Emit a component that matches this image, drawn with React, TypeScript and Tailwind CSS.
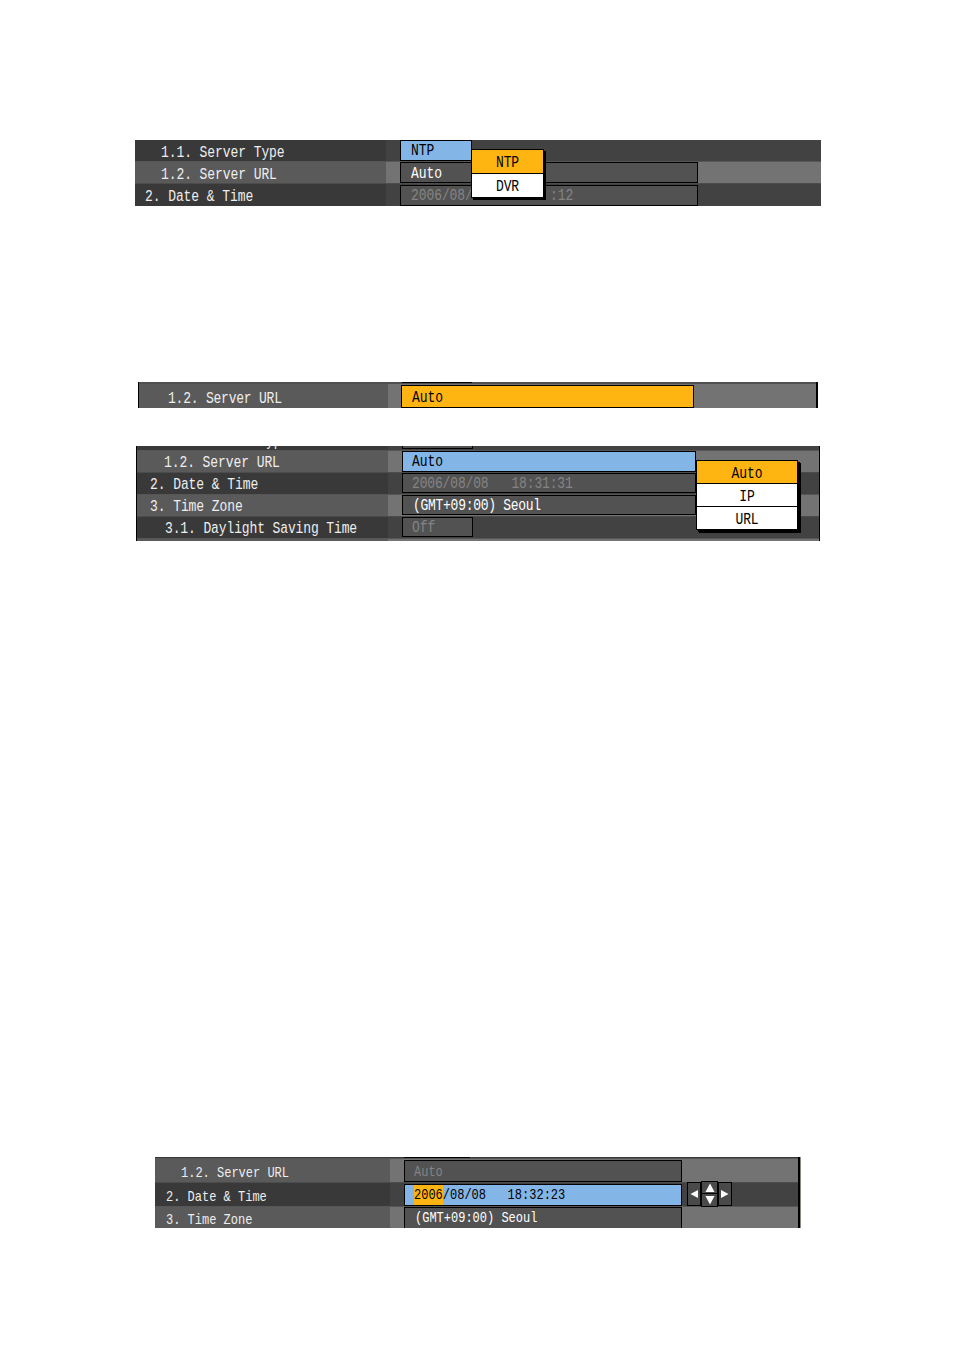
import React from 'react';
import clsx from 'clsx';

interface TextProps {
  children: React.ReactNode;
  className?: string;
}

// tall, narrow OSD lettering
const Osd: React.FC<TextProps> = ({ children, className }) => (
  <span className={clsx('inline-block whitespace-pre origin-center scale-y-[1.25]', className)}>{children}</span>
);

interface RowProps {
  label: string;
  labelClass: string;
  fieldClass: string;
  height: string;
  dark?: boolean;
  children?: React.ReactNode;
  extra?: React.ReactNode;
}

const Row: React.FC<RowProps> = ({ label, labelClass, fieldClass, height, dark = false, children, extra }) => (
  <div className={clsx('flex shrink-0 border-t', height, dark ? 'bg-[#424242] border-[#4c4c4c]' : 'bg-[#737373] border-[#565656]')}>
    <div className={clsx('flex shrink-0 items-center text-[#eeeeee]', dark ? 'bg-[#393939]' : 'bg-[#5a5a5a]', labelClass)}>
      <Osd>{label}</Osd>
    </div>
    <div className={clsx('flex shrink-0 items-center border border-black', fieldClass)}>
      <Osd>{children}</Osd>
    </div>
    {extra}
  </div>
);

interface MenuProps {
  items: string[];
  className: string;
  itemClass: string;
}

const Menu: React.FC<MenuProps> = ({ items, className, itemClass }) => (
  <div className={clsx('absolute flex flex-col border border-black bg-black gap-px', className)}>
    {items.map((item, i) => (
      <div key={item} className={clsx('flex items-center justify-center text-black', itemClass, i === 0 ? 'bg-[#ffb511]' : 'bg-white')}>
        <Osd>{item}</Osd>
      </div>
    ))}
  </div>
);

const Arrow: React.FC<{ points: string; className: string }> = ({ points, className }) => (
  <div className={clsx('flex shrink-0 items-center justify-center border border-black bg-[#4a4a4a]', className)}>
    <svg width="10" height="10" viewBox="0 0 10 10" className="shrink-0">
      <polygon points={points} fill="#fff" />
    </svg>
  </div>
);

const ArrowPad = () => (
  <div className="relative z-10 ml-[5px] -mt-[2px] flex h-[26px] items-center self-start">
    <Arrow points="9,1 9,9 1.5,5" className="h-[24px] w-[14px]" />
    <div className="flex w-[17px] flex-col">
      <Arrow points="5,0.5 9.5,9 0.5,9" className="h-[13px]" />
      <Arrow points="0.5,1 9.5,1 5,9.5" className="-mt-px h-[14px]" />
    </div>
    <Arrow points="1,1 1,9 8.5,5" className="h-[24px] w-[14px]" />
  </div>
);

export default function App() {
  return (
    <div className="flex h-[1349px] w-[954px] flex-col bg-white pt-[140px] font-['Liberation_Mono',monospace] text-[13px] leading-[16px] tracking-[-0.08px]">
      {/* server type */}
      <section className="relative ml-[135px] h-[66px] w-[686px] bg-[#424242]">
        <div className="flex h-full flex-col overflow-hidden">
          <Row label="1.1. Server Type" dark height="h-[21px] !border-t-0" labelClass="w-[251px] pl-[26px] pt-[4px]" fieldClass="ml-[14px] h-[21px] w-[72px] bg-[#84b5e7] pl-[10px] text-black">NTP</Row>
          <Row label="1.2. Server URL" height="h-[22px]" labelClass="w-[251px] pl-[26px] pt-[5px]" fieldClass="ml-[14px] h-[21px] w-[298px] bg-[#525252] pl-[10px] pt-[3px] text-white">Auto</Row>
          <Row label="2. Date & Time" dark height="h-[23px]" labelClass="w-[251px] pl-[10px] pt-[4px]" fieldClass="ml-[14px] mt-px h-[21px] w-[298px] bg-[#525252] pl-[10px] pt-px text-[#848484]">2006/08/          :12</Row>
        </div>
        <Menu items={['NTP', 'DVR']} className="left-[336px] top-[9px] w-[73px] shadow-[2px_2px_0_#000]" itemClass="h-[23px] pt-[2px]" />
      </section>

      {/* server url, focused */}
      <section className="ml-[138px] mt-[176px] flex h-[26px] w-[680px] flex-col border-l border-r-2 border-black">
        <div className="flex h-[2px] bg-[#505050]">
          <div className="ml-[263px] h-px w-[70px] bg-black" />
        </div>
        <div className="flex h-[24px] bg-[#737373]">
          <div className="flex w-[249px] items-center bg-[#5a5a5a] pl-[29px] pt-[5px] text-[#eeeeee] tracking-[-0.22px]">
            <Osd>1.2. Server URL</Osd>
          </div>
          <div className="ml-[13px] mt-px flex h-[23px] w-[293px] items-center border border-black bg-[#ffb511] pl-[10px] pt-[2px] text-black">
            <Osd>Auto</Osd>
          </div>
        </div>
      </section>

      {/* server url, menu open */}
      <section className="relative ml-[136px] mt-[38px] h-[95px] w-[684px] border-l border-r border-black bg-[#737373]">
        <div className="flex h-full flex-col overflow-hidden">
          <div className="flex h-[4px] shrink-0 bg-[#424242]">
            <div className="flex h-[4px] w-[251px] items-end overflow-hidden bg-[#393939] pl-[129px] text-[#eeeeee]">
              <Osd>yp</Osd>
            </div>
            <div className="ml-[14px] h-[3px] w-[71px] border border-t-0 border-black bg-[#525252]" />
          </div>
          <Row label="1.2. Server URL" height="h-[22px]" labelClass="w-[251px] pl-[27px] pt-[3px]" fieldClass="ml-[14px] h-[21px] w-[294px] bg-[#84b5e7] pl-[9px] pt-px text-black">Auto</Row>
          <Row label="2. Date & Time" dark height="h-[22px]" labelClass="w-[251px] pl-[13px] pt-[3px]" fieldClass="ml-[14px] h-[20px] w-[294px] bg-[#525252] pl-[9px] pt-px text-[#848484] tracking-[-0.15px]">2006/08/08   18:31:31</Row>
          <Row label="3. Time Zone" height="h-[22px]" labelClass="w-[251px] pl-[13px] pt-[3px]" fieldClass="ml-[14px] h-[20px] w-[294px] bg-[#525252] pl-[10px] pt-px text-white tracking-[-0.28px]">(GMT+09:00) Seoul</Row>
          <Row label="3.1. Daylight Saving Time" dark height="h-[22px]" labelClass="w-[251px] pl-[28px] pt-[3px] tracking-[-0.12px]" fieldClass="ml-[14px] h-[20px] w-[71px] bg-[#525252] pl-[9px] pt-[2px] text-[#848484]">Off</Row>
          <div className="flex h-[3px] shrink-0 border-t border-[#565656] bg-[#737373]">
            <div className="w-[251px] bg-[#5a5a5a]" />
          </div>
        </div>
        <Menu items={['Auto', 'IP', 'URL']} className="left-[559px] top-[14px] w-[102px] shadow-[2px_2px_0_#000,3px_3px_0_#000]" itemClass="h-[22px] pt-[3px]" />
      </section>

      {/* date editing */}
      <section className="ml-[155px] mt-[616px] flex h-[71px] w-[646px] flex-col overflow-hidden border-r border-[#8a8a82] bg-[#737373] text-[12px] tracking-normal">
        <div className="flex h-full flex-col border-r-2 border-black">
          <div className="flex h-px shrink-0 bg-[#393939]">
            <div className="ml-[249px] w-[66px] bg-black" />
          </div>
          <Row label="1.2. Server URL" height="h-[24px]" labelClass="w-[235px] pl-[26px] pt-[4px]" fieldClass="ml-[14px] mt-px h-[22px] w-[278px] bg-[#525252] pl-[9px] pt-px text-[#848484]">Auto</Row>
          <Row
            label="2. Date & Time"
            dark
            height="h-[24px]"
            labelClass="w-[235px] pl-[11px] pt-[4px]"
            fieldClass="ml-[14px] mt-px h-[22px] w-[278px] bg-[#84b5e7] pl-[9px] text-black"
            extra={<ArrowPad />}
          >
            <span className="bg-[#ffb511] py-px">2006</span>/08/08   18:32:23
          </Row>
          <Row label="3. Time Zone" height="h-[22px]" labelClass="w-[235px] pl-[11px] pt-[4px]" fieldClass="ml-[14px] h-[21px] w-[278px] border-b-0 bg-[#525252] pl-[10px] text-white">(GMT+09:00) Seoul</Row>
        </div>
      </section>
    </div>
  );
}
